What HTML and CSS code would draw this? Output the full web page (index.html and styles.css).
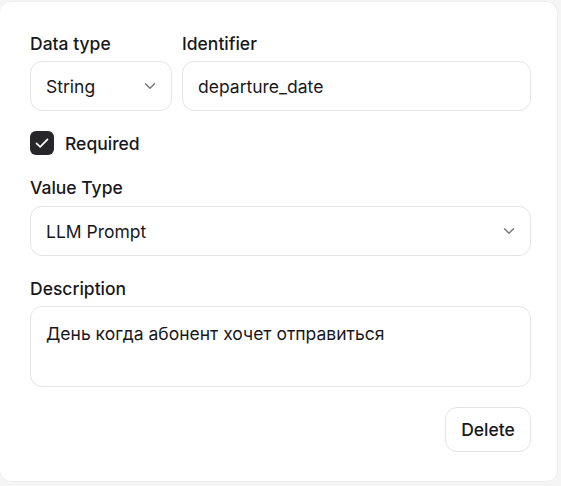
FILE: index.html
```html
<!DOCTYPE html>
<html>
<head>
<meta charset="utf-8">
<link rel="stylesheet" href="styles.css">
</head>
<body>
<div class="card">
  <div class="row">
    <div class="field type-field">
      <div class="label">Data type</div>
      <div class="box select">
        <span>String</span>
        <svg class="chev" width="12" height="8" viewBox="0 0 12 8"><path d="M1.5 1.8 L6 6.2 L10.5 1.8" fill="none" stroke="#71717a" stroke-width="1.3" stroke-linecap="round" stroke-linejoin="round"/></svg>
      </div>
    </div>
    <div class="field grow">
      <div class="label">Identifier</div>
      <div class="box"><span>departure_date</span></div>
    </div>
  </div>
  <div class="check-row">
    <span class="checkbox"><svg width="18" height="18" viewBox="0 0 18 18"><path d="M3.5 9.3 L7.2 12.8 L14.5 5.3" fill="none" stroke="#fff" stroke-width="1.7" stroke-linecap="round" stroke-linejoin="round"/></svg></span>
    <span class="check-label">Required</span>
  </div>
  <div class="field section">
    <div class="label">Value Type</div>
    <div class="box select">
      <span>LLM Prompt</span>
      <svg class="chev" width="12" height="8" viewBox="0 0 12 8"><path d="M1.5 1.8 L6 6.2 L10.5 1.8" fill="none" stroke="#71717a" stroke-width="1.3" stroke-linecap="round" stroke-linejoin="round"/></svg>
    </div>
  </div>
  <div class="field section desc">
    <div class="label">Description</div>
    <div class="box area">День когда абонент хочет отправиться</div>
  </div>
  <div class="actions">
    <button class="btn">Delete</button>
  </div>
</div>
</body>
</html>
```
FILE: styles.css
```css
html, body {
  margin: 0;
  padding: 0;
  background: #f5f5f5;
  font-family: Inter, "Noto Sans", sans-serif;
  color: #18181b;
}
.card {
  margin-top: 1px;
  width: 558px;
  height: 481px;
  box-sizing: border-box;
  background: #fff;
  border: 1px solid #ededed;
  border-left: none;
  border-radius: 12px;
  padding: 32px 26px 0 30px;
}
.row {
  display: flex;
  gap: 10px;
}
.field {
  display: flex;
  flex-direction: column;
}
.type-field { width: 142px; }
.grow { flex: 1; }
.label {
  font-size: 17.5px;
  line-height: 20px;
  font-weight: 500;
  margin-bottom: 7px;
}
.box {
  box-sizing: border-box;
  height: 50px;
  border: 1px solid #e4e4e7;
  border-radius: 12px;
  padding: 0 15px;
  display: flex;
  align-items: center;
  font-size: 17.5px;
}
.select { justify-content: space-between; }
.chev { margin-right: 0; }
.check-row {
  display: flex;
  align-items: center;
  gap: 11px;
  margin-top: 20px;
  height: 24px;
}
.checkbox {
  width: 24px;
  height: 24px;
  border-radius: 6px;
  background: #27272a;
  display: flex;
  align-items: center;
  justify-content: center;
}
.check-label {
  font-size: 17.5px;
  font-weight: 500;
}
.section { margin-top: 23px; }
.section .label { margin-bottom: 8px; }
.desc .label { margin-bottom: 7px; }
.area {
  height: 81px;
  align-items: flex-start;
  padding-top: 16px;
  line-height: 22px;
}
.actions {
  display: flex;
  justify-content: flex-end;
  margin-top: 20px;
}
.btn {
  font-family: Inter, "Noto Sans", sans-serif;
  font-size: 17.5px;
  font-weight: 500;
  color: #18181b;
  background: #fff;
  border: 1px solid #e4e4e7;
  border-radius: 12px;
  width: 86px;
  height: 45px;
  padding: 0;
}
```
